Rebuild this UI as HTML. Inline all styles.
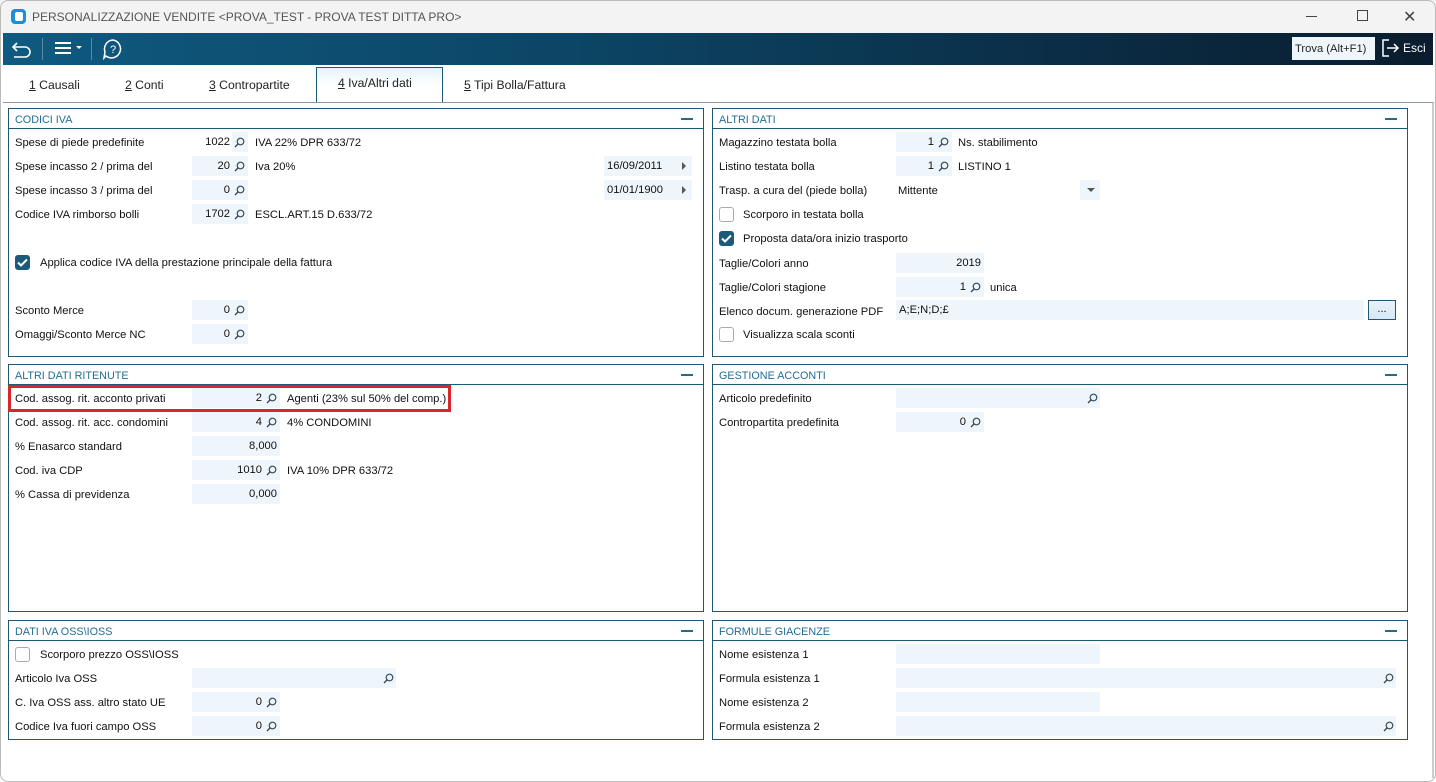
<!DOCTYPE html>
<html><head><meta charset="utf-8"><style>
*{box-sizing:border-box;margin:0;padding:0}
body{width:1436px;height:782px;overflow:hidden;background:#fff;font-family:"Liberation Sans",Tahoma,sans-serif;font-size:11.2px;color:#111;position:relative}
.a{position:absolute;white-space:nowrap}
.win{position:absolute;left:0;top:0;width:1436px;height:782px;background:#fff;overflow:hidden}
.frame{position:absolute;left:0;top:0;width:1436px;height:782px;border:1px solid #bbb;border-radius:8px;pointer-events:none}
.title{position:absolute;left:0;top:0;width:1436px;height:33px;background:#f3f3f3;color:#555;font-size:12px}
.tb{position:absolute;left:3px;top:33px;width:1430px;height:32px;background:linear-gradient(90deg,#0f5a80 0%,#0c4565 40%,#0a1c2e 100%)}
.tabs{position:absolute;left:3px;top:65px;width:1430px;height:38px;background:#fff}
.tab{position:absolute;top:13px;font-size:12.2px;color:#222}
.tab u{text-decoration:underline}
.content{position:absolute;left:3px;top:102px;width:1431px;height:676px;border-top:1px solid #8a98a4;border-right:2px solid #ccc;background:#fff}
.p{position:absolute;border:1px solid #1f5872;background:#fff}
.ph{position:absolute;left:0;top:0;right:0;height:20px;border-bottom:1px solid #1f5872;color:#1f6d95;font-size:10.8px;padding:5px 0 0 6px}
.ph i{position:absolute;right:10px;top:9px;width:12px;height:2px;background:#1f6d95}
.f{position:absolute;height:20px;background:#eef6fc;text-align:right;padding:4px 0 0 0}
.lbl{position:absolute;white-space:nowrap;margin-top:1px}
.cb{position:absolute;width:15px;height:15px;border:1px solid #aaa;border-radius:3px;background:#fff}
.cb.on{background:#1b5a7a;border-color:#1b5a7a}
svg.m{position:absolute;width:11px;height:11px}
</style></head><body>
<div class="win">
<div class="title">
 <div class="a" style="left:11px;top:9px;width:15px;height:15px;border-radius:4px;background:#1e8fd6"></div>
 <div class="a" style="left:15px;top:12px;width:8px;height:9px;border-radius:2px;background:#fff"></div>
 <div class="a" style="left:32px;top:10px">PERSONALIZZAZIONE VENDITE &lt;PROVA_TEST - PROVA TEST DITTA PRO&gt;</div>
 <div class="a" style="left:1306px;top:16px;width:11px;height:1px;background:#444"></div>
 <div class="a" style="left:1357px;top:10px;width:11px;height:11px;border:1px solid #444"></div>
 <div class="a" style="left:1403px;top:7px;font-size:16px;color:#444">✕</div>
</div>
<div class="tb">
 <svg class="a" style="left:8px;top:6px" width="22" height="20" viewBox="0 0 22 20"><path d="M6 4 L2 8 L6 12 M2 8 H14 A5 5 0 0 1 14 18 H3" fill="none" stroke="#fff" stroke-width="1.6"/></svg>
 <div class="a" style="left:39px;top:5px;width:1px;height:22px;background:#5d8aa5"></div>
 <div class="a" style="left:52px;top:9px;width:16px;height:2px;background:#fff;box-shadow:0 5px 0 #fff,0 10px 0 #fff"></div>
 <div class="a" style="left:73px;top:13px;border-left:3px solid transparent;border-right:3px solid transparent;border-top:3px solid #fff"></div>
 <div class="a" style="left:88px;top:5px;width:1px;height:22px;background:#5d8aa5"></div>
 <svg class="a" style="left:99px;top:5px" width="22" height="22" viewBox="0 0 22 22"><path d="M11 2 A9 9 0 1 1 4 18 L2 20 L3 14 A9 9 0 0 1 11 2Z" fill="none" stroke="#fff" stroke-width="1.5"/><text x="11" y="15" font-size="11" fill="#fff" text-anchor="middle" font-family="Liberation Sans">?</text></svg>
 <div class="a" style="left:1289px;top:4px;width:83px;height:23px;background:#eef6fc;color:#222;font-size:11.2px;padding:6px 0 0 3px">Trova (Alt+F1)</div>
 <svg class="a" style="left:1378px;top:5px" width="20" height="20" viewBox="0 0 20 20"><path d="M8 2 H2 V18 H8 M6 10 H17 M13 6 L17 10 L13 14" fill="none" stroke="#fff" stroke-width="1.5"/></svg>
 <div class="a" style="left:1400px;top:8px;color:#fff;font-size:12px">Esci</div>
</div>
<div class="tabs">
 <div class="tab" style="left:26px"><u>1</u> Causali</div>
 <div class="tab" style="left:122px"><u>2</u> Conti</div>
 <div class="tab" style="left:206px"><u>3</u> Contropartite</div>
 <div class="a" style="left:313px;top:2px;width:127px;height:37px;border:1px solid #1f5872;border-bottom:none;background:linear-gradient(#e6f3fb,#fff 50%)"></div>
 <div class="tab" style="left:335px;top:11px"><u>4</u> Iva/Altri dati</div>
 <div class="tab" style="left:461px"><u>5</u> Tipi Bolla/Fattura</div>
</div>
<div class="content"></div>

<div class="p" style="left:8px;top:108px;width:696px;height:249px"><div class="ph">CODICI IVA<i></i></div></div>
<div class="p" style="left:712px;top:108px;width:696px;height:249px"><div class="ph">ALTRI DATI<i></i></div></div>
<div class="p" style="left:8px;top:364px;width:696px;height:248px"><div class="ph">ALTRI DATI RITENUTE<i></i></div></div>
<div class="p" style="left:712px;top:364px;width:696px;height:248px"><div class="ph">GESTIONE ACCONTI<i></i></div></div>
<div class="p" style="left:8px;top:620px;width:696px;height:120px"><div class="ph">DATI IVA OSS\IOSS<i></i></div></div>
<div class="p" style="left:712px;top:620px;width:696px;height:120px"><div class="ph">FORMULE GIACENZE<i></i></div></div>

<svg width="0" height="0" style="position:absolute"><defs><symbol id="mg" viewBox="0 0 11 11"><circle cx="6.5" cy="4.5" r="3.3" fill="none" stroke="#3a4a5a" stroke-width="1.2"/><path d="M4.2 6.8 L1 10" stroke="#3a4a5a" stroke-width="1.4"/></symbol></defs></svg>

<div class="lbl" style="left:15px;top:136px">Spese di piede predefinite</div>
<div class="f" style="left:192px;top:132px;width:56px;background:linear-gradient(90deg,#fff 0,#fff 40px,#eef6fc 40px)"><span style="position:absolute;right:18px">1022</span></div><svg class="m" style="left:234px;top:137px"><use href="#mg"/></svg>
<div class="lbl" style="left:255px;top:136px">IVA 22% DPR 633/72</div>
<div class="lbl" style="left:15px;top:160px">Spese incasso 2 / prima del</div>
<div class="f" style="left:192px;top:156px;width:56px"><span style="position:absolute;right:18px">20</span></div><svg class="m" style="left:234px;top:161px"><use href="#mg"/></svg>
<div class="lbl" style="left:255px;top:160px">Iva 20%</div>
<div class="f" style="left:604px;top:156px;width:88px;text-align:left;padding-left:3px">16/09/2011</div><div class="a" style="left:682px;top:162px;border-top:4px solid transparent;border-bottom:4px solid transparent;border-left:4px solid #555"></div>
<div class="lbl" style="left:15px;top:184px">Spese incasso 3 / prima del</div>
<div class="f" style="left:192px;top:180px;width:56px"><span style="position:absolute;right:18px">0</span></div><svg class="m" style="left:234px;top:185px"><use href="#mg"/></svg>
<div class="f" style="left:604px;top:180px;width:88px;text-align:left;padding-left:3px">01/01/1900</div><div class="a" style="left:682px;top:186px;border-top:4px solid transparent;border-bottom:4px solid transparent;border-left:4px solid #555"></div>
<div class="lbl" style="left:15px;top:208px">Codice IVA rimborso bolli</div>
<div class="f" style="left:192px;top:204px;width:56px"><span style="position:absolute;right:18px">1702</span></div><svg class="m" style="left:234px;top:209px"><use href="#mg"/></svg>
<div class="lbl" style="left:255px;top:208px">ESCL.ART.15 D.633/72</div>
<div class="cb on" style="left:15px;top:255px"></div><svg class="a" style="left:17px;top:258px" width="11" height="9"><path d="M1 4.5 L4 7.5 L10 1.5" fill="none" stroke="#fff" stroke-width="2"/></svg>
<div class="lbl" style="left:40px;top:256px">Applica codice IVA della prestazione principale della fattura</div>
<div class="lbl" style="left:15px;top:304px">Sconto Merce</div>
<div class="f" style="left:192px;top:300px;width:56px"><span style="position:absolute;right:18px">0</span></div><svg class="m" style="left:234px;top:305px"><use href="#mg"/></svg>
<div class="lbl" style="left:15px;top:328px">Omaggi/Sconto Merce NC</div>
<div class="f" style="left:192px;top:324px;width:56px"><span style="position:absolute;right:18px">0</span></div><svg class="m" style="left:234px;top:329px"><use href="#mg"/></svg>

<div class="lbl" style="left:719px;top:136px">Magazzino testata bolla</div>
<div class="f" style="left:896px;top:132px;width:56px"><span style="position:absolute;right:18px">1</span></div><svg class="m" style="left:938px;top:137px"><use href="#mg"/></svg>
<div class="lbl" style="left:958px;top:136px">Ns. stabilimento</div>
<div class="lbl" style="left:719px;top:160px">Listino testata bolla</div>
<div class="f" style="left:896px;top:156px;width:56px"><span style="position:absolute;right:18px">1</span></div><svg class="m" style="left:938px;top:161px"><use href="#mg"/></svg>
<div class="lbl" style="left:958px;top:160px">LISTINO 1</div>
<div class="lbl" style="left:719px;top:184px">Trasp. a cura del (piede bolla)</div>
<div class="lbl" style="left:898px;top:184px">Mittente</div>
<div class="f" style="left:1080px;top:180px;width:20px"></div><div class="a" style="left:1087px;top:188px;border-left:4px solid transparent;border-right:4px solid transparent;border-top:4px solid #555"></div>
<div class="cb" style="left:719px;top:207px"></div>
<div class="lbl" style="left:743px;top:208px">Scorporo in testata bolla</div>
<div class="cb on" style="left:719px;top:231px"></div><svg class="a" style="left:721px;top:234px" width="11" height="9"><path d="M1 4.5 L4 7.5 L10 1.5" fill="none" stroke="#fff" stroke-width="2"/></svg>
<div class="lbl" style="left:743px;top:232px">Proposta data/ora inizio trasporto</div>
<div class="lbl" style="left:719px;top:257px">Taglie/Colori anno</div>
<div class="f" style="left:896px;top:253px;width:88px;padding-right:3px">2019</div>
<div class="lbl" style="left:719px;top:281px">Taglie/Colori stagione</div>
<div class="f" style="left:896px;top:277px;width:88px"><span style="position:absolute;right:18px">1</span></div><svg class="m" style="left:970px;top:282px"><use href="#mg"/></svg>
<div class="lbl" style="left:990px;top:281px">unica</div>
<div class="lbl" style="left:719px;top:305px">Elenco docum. generazione PDF</div>
<div class="f" style="left:896px;top:300px;width:468px;text-align:left;padding-left:3px">A;E;N;D;£</div>
<div class="a" style="left:1368px;top:300px;width:28px;height:20px;border:1px solid #1f5872;background:linear-gradient(#e8f2fa,#d6e8f5);text-align:center;font-size:11px;line-height:16px">...</div>
<div class="cb" style="left:719px;top:327px"></div>
<div class="lbl" style="left:743px;top:328px">Visualizza scala sconti</div>

<div class="lbl" style="left:15px;top:392px">Cod. assog. rit. acconto privati</div>
<div class="f" style="left:192px;top:388px;width:88px"><span style="position:absolute;right:18px">2</span></div><svg class="m" style="left:266px;top:393px"><use href="#mg"/></svg>
<div class="lbl" style="left:287px;top:392px">Agenti (23% sul 50% del comp.)</div>
<div class="a" style="left:8px;top:385px;width:443px;height:27px;border:3px solid #d9262a"></div>
<div class="lbl" style="left:15px;top:416px">Cod. assog. rit. acc. condomini</div>
<div class="f" style="left:192px;top:412px;width:88px"><span style="position:absolute;right:18px">4</span></div><svg class="m" style="left:266px;top:417px"><use href="#mg"/></svg>
<div class="lbl" style="left:287px;top:416px">4% CONDOMINI</div>
<div class="lbl" style="left:15px;top:440px">% Enasarco standard</div>
<div class="f" style="left:192px;top:436px;width:88px;padding-right:3px">8,000</div>
<div class="lbl" style="left:15px;top:464px">Cod. iva CDP</div>
<div class="f" style="left:192px;top:460px;width:88px"><span style="position:absolute;right:18px">1010</span></div><svg class="m" style="left:266px;top:465px"><use href="#mg"/></svg>
<div class="lbl" style="left:287px;top:464px">IVA 10% DPR 633/72</div>
<div class="lbl" style="left:15px;top:488px">% Cassa di previdenza</div>
<div class="f" style="left:192px;top:484px;width:88px;padding-right:3px">0,000</div>

<div class="lbl" style="left:719px;top:392px">Articolo predefinito</div>
<div class="f" style="left:896px;top:388px;width:204px"></div><svg class="m" style="left:1087px;top:393px"><use href="#mg"/></svg>
<div class="lbl" style="left:719px;top:416px">Contropartita predefinita</div>
<div class="f" style="left:896px;top:412px;width:88px"><span style="position:absolute;right:18px">0</span></div><svg class="m" style="left:970px;top:417px"><use href="#mg"/></svg>

<div class="cb" style="left:15px;top:647px"></div>
<div class="lbl" style="left:40px;top:648px">Scorporo prezzo OSS\IOSS</div>
<div class="lbl" style="left:15px;top:672px">Articolo Iva OSS</div>
<div class="f" style="left:192px;top:668px;width:204px"></div><svg class="m" style="left:383px;top:673px"><use href="#mg"/></svg>
<div class="lbl" style="left:15px;top:696px">C. Iva OSS ass. altro stato UE</div>
<div class="f" style="left:192px;top:692px;width:88px"><span style="position:absolute;right:18px">0</span></div><svg class="m" style="left:266px;top:697px"><use href="#mg"/></svg>
<div class="lbl" style="left:15px;top:720px">Codice Iva fuori campo OSS</div>
<div class="f" style="left:192px;top:716px;width:88px"><span style="position:absolute;right:18px">0</span></div><svg class="m" style="left:266px;top:721px"><use href="#mg"/></svg>

<div class="lbl" style="left:719px;top:648px">Nome esistenza 1</div>
<div class="f" style="left:896px;top:644px;width:204px"></div>
<div class="lbl" style="left:719px;top:672px">Formula esistenza 1</div>
<div class="f" style="left:896px;top:668px;width:500px"></div><svg class="m" style="left:1383px;top:673px"><use href="#mg"/></svg>
<div class="lbl" style="left:719px;top:696px">Nome esistenza 2</div>
<div class="f" style="left:896px;top:692px;width:204px"></div>
<div class="lbl" style="left:719px;top:720px">Formula esistenza 2</div>
<div class="f" style="left:896px;top:716px;width:500px"></div><svg class="m" style="left:1383px;top:721px"><use href="#mg"/></svg>
</div>
<div class="frame"></div>
</body></html>
